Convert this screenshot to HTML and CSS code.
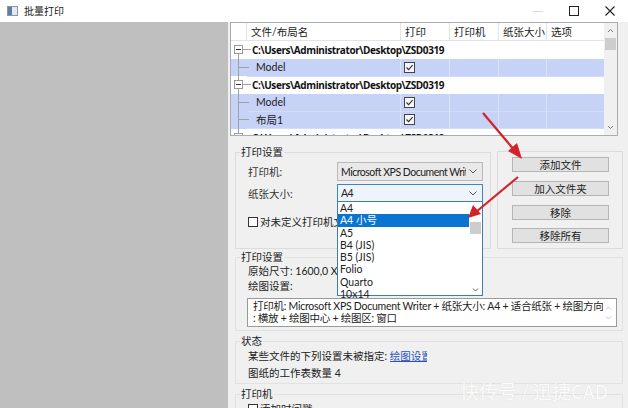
FILE: index.html
```html
<!DOCTYPE html>
<html lang="zh-CN">
<head>
<meta charset="utf-8">
<title>批量打印</title>
<link rel="stylesheet" href="styles.css">
</head>
<body>
<div class="window">
  <div class="titlebar">
    <svg class="app-icon" width="11" height="10" viewBox="0 0 11 10"><rect x="0.5" y="0.5" width="10" height="9" fill="#e4e9ef" stroke="#8a96a3"/><rect x="1" y="1" width="4" height="8" fill="#5b7fa6"/></svg>
    <span class="title">批量打印</span>
    <div class="controls">
      <div class="ctl"><svg width="10" height="10" viewBox="0 0 10 10"><line x1="0" y1="5.5" x2="10" y2="5.5" stroke="#d8d8d8" stroke-width="1"/></svg></div>
      <div class="ctl"><svg width="10" height="10" viewBox="0 0 10 10"><rect x="0.5" y="0.5" width="9" height="9" fill="none" stroke="#222" stroke-width="1"/></svg></div>
      <div class="ctl"><svg width="10" height="10" viewBox="0 0 10 10"><path d="M0.5 0.5 L9.5 9.5 M9.5 0.5 L0.5 9.5" stroke="#222" stroke-width="1.1"/></svg></div>
    </div>
  </div>
  <div class="body">
    <div class="sidebar"></div>
    <div class="panel">
      <div class="grid">
        <div class="grid-main">
          <div class="row head">
            <div class="cell"></div>
            <div class="cell">文件/布局名</div>
            <div class="cell">打印</div>
            <div class="cell">打印机</div>
            <div class="cell">纸张大小</div>
            <div class="cell">选项</div>
          </div>
          <div class="row group">
            <div class="tree"><svg width="16" height="18" viewBox="0 0 16 18"><line x1="7.5" y1="13" x2="7.5" y2="18" stroke="#a0a0a0"/><line x1="12" y1="8.5" x2="20" y2="8.5" stroke="#a0a0a0"/><rect x="3.5" y="4.5" width="8" height="8" fill="#fff" stroke="#9a9a9a"/><line x1="5" y1="8.5" x2="10" y2="8.5" stroke="#333"/></svg></div>
            <div class="gname">C:\Users\Administrator\Desktop\ZSD0319</div>
          </div>
          <div class="row child">
            <div class="tree"><svg width="16" height="18" viewBox="0 0 16 18"><line x1="7.5" y1="0" x2="7.5" y2="18" stroke="#a0a0a0"/><line x1="8" y1="8.5" x2="18" y2="8.5" stroke="#a0a0a0"/></svg></div>
            <div class="cell name">Model</div>
            <div class="cell"><svg class="chk" width="11" height="11" viewBox="0 0 11 11"><rect x="0.5" y="0.5" width="10" height="10" fill="#f4f6fb" stroke="#444"/><path d="M2.5 5.5 L4.6 7.6 L8.6 3.2" fill="none" stroke="#333" stroke-width="1.1"/></svg></div>
            <div class="cell"></div>
            <div class="cell"></div>
            <div class="cell"></div>
          </div>
          <div class="row group">
            <div class="tree"><svg width="16" height="18" viewBox="0 0 16 18"><line x1="7.5" y1="0" x2="7.5" y2="18" stroke="#a0a0a0"/><line x1="12" y1="8.5" x2="20" y2="8.5" stroke="#a0a0a0"/><rect x="3.5" y="4.5" width="8" height="8" fill="#fff" stroke="#9a9a9a"/><line x1="5" y1="8.5" x2="10" y2="8.5" stroke="#333"/></svg></div>
            <div class="gname">C:\Users\Administrator\Desktop\ZSD0319</div>
          </div>
          <div class="row child">
            <div class="tree"><svg width="16" height="18" viewBox="0 0 16 18"><line x1="7.5" y1="0" x2="7.5" y2="18" stroke="#a0a0a0"/><line x1="8" y1="8.5" x2="18" y2="8.5" stroke="#a0a0a0"/></svg></div>
            <div class="cell name">Model</div>
            <div class="cell"><svg class="chk" width="11" height="11" viewBox="0 0 11 11"><rect x="0.5" y="0.5" width="10" height="10" fill="#f4f6fb" stroke="#444"/><path d="M2.5 5.5 L4.6 7.6 L8.6 3.2" fill="none" stroke="#333" stroke-width="1.1"/></svg></div>
            <div class="cell"></div>
            <div class="cell"></div>
            <div class="cell"></div>
          </div>
          <div class="row child">
            <div class="tree"><svg width="16" height="18" viewBox="0 0 16 18"><line x1="7.5" y1="0" x2="7.5" y2="18" stroke="#a0a0a0"/><line x1="8" y1="8.5" x2="18" y2="8.5" stroke="#a0a0a0"/></svg></div>
            <div class="cell name">布局1</div>
            <div class="cell"><svg class="chk" width="11" height="11" viewBox="0 0 11 11"><rect x="0.5" y="0.5" width="10" height="10" fill="#f4f6fb" stroke="#444"/><path d="M2.5 5.5 L4.6 7.6 L8.6 3.2" fill="none" stroke="#333" stroke-width="1.1"/></svg></div>
            <div class="cell"></div>
            <div class="cell"></div>
            <div class="cell"></div>
          </div>
          <div class="row group">
            <div class="tree"><svg width="16" height="18" viewBox="0 0 16 18"><line x1="7.5" y1="0" x2="7.5" y2="18" stroke="#a0a0a0"/><line x1="12" y1="8.5" x2="20" y2="8.5" stroke="#a0a0a0"/><rect x="3.5" y="4.5" width="8" height="8" fill="#fff" stroke="#9a9a9a"/><line x1="5" y1="8.5" x2="10" y2="8.5" stroke="#333"/></svg></div>
            <div class="gname">C:\Users\Administrator\Desktop\ZSD0319</div>
          </div>
        </div>
        <div class="vscroll">
          <svg class="sarrow" width="13" height="14" viewBox="0 0 13 14"><path d="M4 9 L6.5 6.5 L9 9" fill="none" stroke="#777" stroke-width="1"/></svg>
          <div class="thumb"></div>
          <div class="spacer"></div>
          <svg class="sarrow" width="13" height="14" viewBox="0 0 13 14"><path d="M4 5 L6.5 7.5 L9 5" fill="none" stroke="#777" stroke-width="1"/></svg>
        </div>
      </div>

      <div class="settings-row">
        <fieldset class="group print-group">
          <legend>打印设置</legend>
          <div class="gb">
            <div class="field">
              <span class="flabel">打印机:</span>
              <div class="combo">
                <span class="ctext">Microsoft XPS Document Writer</span>
                <svg class="chev" width="8" height="5" viewBox="0 0 8 5"><path d="M0.5 0.5 L4 4 L7.5 0.5" fill="none" stroke="#555"/></svg>
              </div>
            </div>
            <div class="field f2">
              <span class="flabel">纸张大小:</span>
              <div class="combo open">
                <span class="ctext">A4</span>
                <svg class="chev" width="8" height="5" viewBox="0 0 8 5"><path d="M0.5 0.5 L4 4 L7.5 0.5" fill="none" stroke="#555"/></svg>
                <div class="dropdown">
                  <ul class="items">
                    <li>A4</li>
                    <li class="sel">A4 小号</li>
                    <li>A5</li>
                    <li>B4 (JIS)</li>
                    <li>B5 (JIS)</li>
                    <li>Folio</li>
                    <li>Quarto</li>
                    <li>10x14</li>
                  </ul>
                  <div class="dscroll">
                    <div class="dspace-top"></div>
                    <div class="dthumb"></div>
                    <div class="spacer"></div>
                    <svg width="13" height="10" viewBox="0 0 13 10"><path d="M4 3.5 L6.5 6 L9 3.5" fill="none" stroke="#666" stroke-width="1"/></svg>
                  </div>
                </div>
              </div>
            </div>
            <label class="checkrow">
              <span class="box"></span>
              <span>对未定义打印机文件使用此设置</span>
            </label>
          </div>
        </fieldset>
        <fieldset class="group btn-group">
          <button class="btn">添加文件</button>
          <button class="btn">加入文件夹</button>
          <button class="btn">移除</button>
          <button class="btn">移除所有</button>
        </fieldset>
      </div>

      <fieldset class="group plot-group">
        <legend>打印设置</legend>
        <div class="gb">
          <div class="line">原始尺寸: 1600,0 X 1200,0</div>
          <div class="line">绘图设置:</div>
          <div class="memo">
            <div class="memo-text">打印机: Microsoft XPS Document Writer + 纸张大小: A4 + 适合纸张 + 绘图方向<br>: 横放 + 绘图中心 + 绘图区: 窗口</div>
            <div class="memo-scroll">
              <svg width="9" height="6" viewBox="0 0 9 6"><path d="M2 4.5 L4.5 2 L7 4.5" fill="none" stroke="#c4c4c4"/></svg>
              <svg width="9" height="6" viewBox="0 0 9 6"><path d="M2 1.5 L4.5 4 L7 1.5" fill="none" stroke="#c4c4c4"/></svg>
            </div>
          </div>
        </div>
      </fieldset>

      <fieldset class="group status-group">
        <legend>状态</legend>
        <div class="gb">
          <div class="line">某些文件的下列设置未被指定: <span class="link">绘图设置</span></div>
          <div class="line">图纸的工作表数量 4</div>
        </div>
      </fieldset>

      <fieldset class="group printer-group">
        <legend>打印机</legend>
        <div class="gb">
          <label class="checkrow small">
            <span class="box"></span>
            <span>添加时间戳</span>
          </label>
        </div>
      </fieldset>
    </div>
  </div>

  <svg class="arrows" width="628" height="408" viewBox="0 0 628 408">
    <line x1="483" y1="113" x2="515" y2="151" stroke="#d2232a" stroke-width="2.2"/>
    <polygon points="522,159 508,151 517,143" fill="#d2232a"/>
    <line x1="518" y1="177" x2="476" y2="212" stroke="#d2232a" stroke-width="2.2"/>
    <polygon points="468,218 473,205 481,214" fill="#d2232a"/>
  </svg>
  <div class="watermark">快传号 / 迅捷CAD</div>
</div>
</body>
</html>
```
FILE: styles.css
```css
* { box-sizing: border-box; }
html, body { margin: 0; padding: 0; }
body {
  width: 628px;
  height: 408px;
  overflow: hidden;
  background: #fff;
  font-family: Lato, "Noto Sans CJK SC", sans-serif;
  font-size: 10.5px;
  color: #1a1a1a;
}
.window {
  position: relative;
  width: 628px;
  height: 408px;
  display: flex;
  flex-direction: column;
  overflow: hidden;
}
.titlebar {
  flex: none;
  height: 22px;
  display: flex;
  align-items: center;
  padding-left: 7px;
  background: #fff;
}
.app-icon { margin-right: 6px; }
.title { font-size: 10px; color: #222; line-height: 14px; }
.controls { margin-left: auto; display: flex; height: 22px; }
.ctl { width: 36px; display: flex; align-items: center; justify-content: center; }

.body { flex: 1; display: flex; min-height: 0; }
.sidebar { flex: none; width: 228px; background: #bfbfbf; }
.panel {
  flex: 1;
  min-width: 0;
  background: #f0f0f0;
  padding: 0 5px 0 2px;
  display: flex;
  flex-direction: column;
  overflow: hidden;
}

/* grid */
.grid {
  flex: none;
  width: 388px;
  height: 114px;
  border: 1px solid #a9acb2;
  background: #fff;
  display: flex;
  overflow: hidden;
}
.grid-main { flex: 1; min-width: 0; overflow: hidden; }
.row {
  display: grid;
  grid-template-columns: 16px 154px 49px 49px 48px 1fr;
  height: 17.5px;
  align-items: stretch;
}
.row .cell {
  border-right: 1px solid #e3e3e3;
  padding-left: 4px;
  display: flex;
  align-items: center;
  white-space: nowrap;
  overflow: hidden;
}
.row.head { height: 18px; border-bottom: 1px solid #e3e3e3; }
.row.head .cell { color: #222; }
.row.head .cell:last-child { border-right: none; }
.tree { position: relative; overflow: visible; }
.tree svg { display: block; overflow: visible; }
.row.group { background: #fff; grid-template-columns: 16px 1fr; }
.gname {
  font-family: "Open Sans", "Noto Sans", sans-serif;
  font-weight: 700;
  font-size: 10px;
  letter-spacing: -0.4px;
  padding-left: 5px;
  display: flex;
  align-items: center;
  white-space: nowrap;
  color: #111;
}
.row.child { background: #c6d3f6; }
.row.child .cell { border-right-color: #dbe3f8; border-bottom: 1px solid #d3ddf7; }
.row.child .cell:last-child { border-right: none; }
.row.child .name { padding-left: 9px; font-size: 10.5px; }
.chk { display: block; margin-left: -1px; }

.vscroll {
  flex: none;
  width: 13px;
  background: #f0f0f0;
  display: flex;
  flex-direction: column;
}
.sarrow { display: block; flex: none; }
.thumb { flex: none; height: 12px; margin: 1px 1px 0; background: #cdcdcd; }
.spacer { flex: 1; }

/* group boxes */
fieldset.group {
  margin: 0;
  min-width: 0;
  border: 1px solid #dcdcdc;
  padding: 0;
}
fieldset.group > legend {
  margin-left: 4px;
  padding: 0 1px;
  line-height: 14px;
  font-size: 10.5px;
  color: #222;
}
.settings-row {
  flex: none;
  display: flex;
  align-items: flex-start;
  margin-top: 9px;
}
fieldset.print-group {
  width: 256px;
  height: 104px;
  margin-left: 5px;
}
.print-group .gb { padding: 0 7px 0 12px; }
.field { display: flex; align-items: center; margin-top: 3px; height: 19px; }
.field.f2 { height: 18px; }
.flabel { width: 89px; flex: none; color: #333; }
.combo {
  position: relative;
  width: 146px;
  height: 100%;
  border: 1px solid #b9b9b9;
  background: #e9e9e9;
  display: flex;
  align-items: center;
  padding: 0 5px 0 3px;
}
.combo.open { border-color: #3d86c6; background: #edf4fb; }
.ctext {
  flex: 1;
  min-width: 0;
  overflow: hidden;
  white-space: nowrap;
  font-size: 10.5px;
  letter-spacing: -0.5px;
  color: #222;
}
.chev { flex: none; margin-left: 3px; }
.dropdown {
  position: absolute;
  z-index: 5;
  left: -1px;
  top: 100%;
  width: 146px;
  height: 95px;
  background: #fff;
  border: 1px solid #3d7db5;
  display: flex;
}
.items {
  list-style: none;
  margin: 0;
  padding: 0;
  flex: 1;
  min-width: 0;
}
.items li {
  height: 12.3px;
  line-height: 12.3px;
  padding-left: 2px;
  font-size: 10.5px;
  color: #222;
  white-space: nowrap;
}
.items li.sel { background: #0a74d0; color: #fff; }
.dscroll {
  flex: none;
  width: 13px;
  display: flex;
  flex-direction: column;
  padding: 0 1px;
}
.dspace-top { height: 20px; flex: none; }
.dthumb { height: 12px; flex: none; background: #cdcdcd; }
.dscroll svg { display: block; flex: none; margin-left: -1px; }

.checkrow {
  display: flex;
  align-items: center;
  gap: 2px;
  margin-top: 12px;
  color: #222;
  white-space: nowrap;
}
.box {
  width: 10px;
  height: 10px;
  border: 1px solid #333;
  background: #fff;
  flex: none;
}

fieldset.btn-group {
  width: 126px;
  height: 98px;
  margin-left: 6px;
  margin-top: 6px;
  padding: 5px 13px 0 14px;
  display: flex;
  flex-direction: column;
}
.btn {
  height: 15px;
  width: 97px;
  margin: 0 0 9px;
  padding: 0;
  border: 1px solid #b5b5b5;
  background: #e1e1e1;
  font-family: "Noto Sans CJK SC", sans-serif;
  font-size: 10.5px;
  line-height: 13px;
  color: #222;
}
.btn:nth-child(3) { margin-bottom: 8px; }

fieldset.plot-group,
fieldset.status-group,
fieldset.printer-group {
  flex: none;
  width: 388px;
  margin-left: 5px;
  border-color: #e2e2e2;
}
fieldset.plot-group { margin-top: 1px; }
.plot-group .gb { padding: 0 5px 3px 12px; }
.line { line-height: 14px; color: #222; white-space: nowrap; overflow: hidden; }
.plot-group .line + .line { margin-top: 1px; }
.memo {
  margin: 5px 0 0 -1px;
  height: 29px;
  border: 1px solid #9a9a9a;
  background: #fff;
  display: flex;
}
.memo-text {
  flex: 1;
  padding: 1px 0 0 5px;
  line-height: 12px;
  font-size: 10.5px;
  letter-spacing: -0.25px;
  color: #222;
  white-space: nowrap;
  overflow: hidden;
}
.memo-scroll {
  flex: none;
  width: 13px;
  display: flex;
  flex-direction: column;
  justify-content: center;
  gap: 4px;
  padding-left: 1px;
}
.memo-scroll svg { display: block; }

fieldset.status-group { margin-top: 3px; }
.status-group .gb { padding: 1px 6px 3px 12px; }
.status-group .line + .line { margin-top: 3px; }
.link {
  display: inline-block;
  width: 37px;
  overflow: hidden;
  vertical-align: top;
  color: #2a52be;
  text-decoration: underline;
  white-space: nowrap;
}
fieldset.printer-group { margin-top: 3px; }
.printer-group .gb { padding: 0 6px 3px 12px; }
.checkrow.small { margin-top: 0; }

.arrows {
  position: absolute;
  left: 0;
  top: 0;
  z-index: 10;
  pointer-events: none;
}
.watermark {
  position: absolute;
  z-index: 11;
  left: 460px;
  top: 379px;
  font-family: "Noto Sans CJK SC", sans-serif;
  font-size: 19px;
  line-height: 24px;
  color: rgba(255, 255, 255, 0.95);
  text-shadow: 0 0 1px rgba(0, 0, 0, 0.12);
  white-space: nowrap;
}
```
